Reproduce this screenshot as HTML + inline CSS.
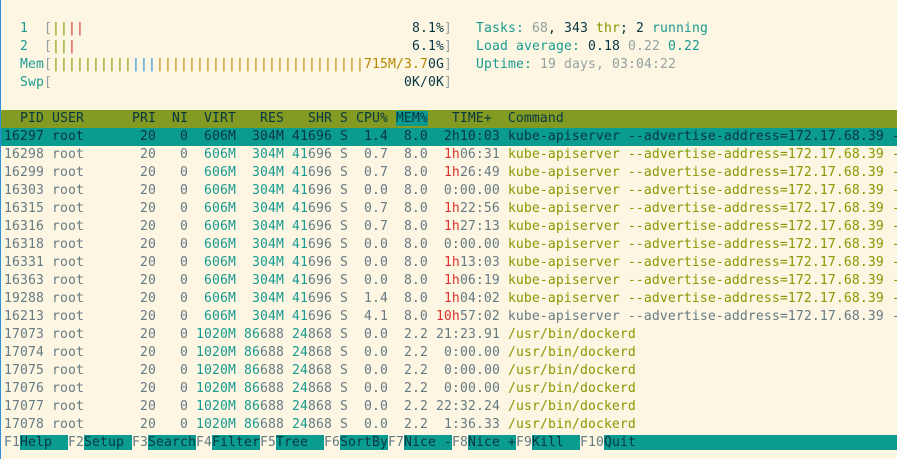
<!DOCTYPE html>
<html><head><meta charset="utf-8"><style>
html,body{margin:0;padding:0;background:#fdf6e3;}
body{width:897px;height:459px;overflow:hidden;position:relative;font-family:"DejaVu Sans Mono","Liberation Mono",monospace;font-size:13.08px;letter-spacing:0.125px;color:#657b83;border-left:1px solid #2f8fd8;box-sizing:border-box;}
.l{height:18px;line-height:18px;white-space:pre;padding-left:3px;overflow:hidden;}
.top{position:absolute;left:0;top:2px;width:897px;}
.hd{background:#839b22;color:#073642;}
.sel{background:#0b9c91;color:#073642;}
.mh{background:#0b9c91;}
.t{color:#1a9a90}.d{color:#073642}.g{color:#93a1a1}.o{color:#859900}.r{color:#dc322f}.y{color:#b58900}.b{color:#268bd2}
.fk{background:#0b9c91;color:#073642;}
.rt{position:absolute;left:475px;top:20px;}
</style></head><body>
<div class="top">
<div class="l"> </div>
<div class="l"><span class="t">  1  </span><span class="g">[</span><span class="o">||</span><span class="r">||</span>                                         <span class="d">8.1%</span><span class="g">]</span></div>
<div class="l"><span class="t">  2  </span><span class="g">[</span><span class="o">||</span><span class="r">|</span>                                          <span class="d">6.1%</span><span class="g">]</span></div>
<div class="l"><span class="t">  Mem</span><span class="g">[</span><span class="o">||||||||||</span><span class="b">|||</span><span class="y">||||||||||||||||||||||||||715M/3.7</span><span class="d">0G</span><span class="g">]</span></div>
<div class="l"><span class="t">  Swp</span><span class="g">[</span>                                            <span class="d">0K/0K</span><span class="g">]</span></div>
<div class="l"> </div>
<div class="l hd">  PID USER      PRI  NI  VIRT   RES   SHR S CPU% <span class="mh">MEM%</span>   TIME+  Command                                </div>
<div class="l sel">16297 root       20   0  606M  304M 41696 S  1.4  8.0  2h10:03 kube-apiserver --advertise-address=172.17.68.39 -        </div>
<div class="l">16298 root       20   0  <span class="t">606M  304M 41</span>696 S  0.7  8.0  <span class="r">1h</span>06:31 <span class="o">kube-apiserver --advertise-address=172.17.68.39 -</span></div>
<div class="l">16299 root       20   0  <span class="t">606M  304M 41</span>696 S  0.7  8.0  <span class="r">1h</span>26:49 <span class="o">kube-apiserver --advertise-address=172.17.68.39 -</span></div>
<div class="l">16303 root       20   0  <span class="t">606M  304M 41</span>696 S  0.0  8.0  0:00.00 <span class="o">kube-apiserver --advertise-address=172.17.68.39 -</span></div>
<div class="l">16315 root       20   0  <span class="t">606M  304M 41</span>696 S  0.7  8.0  <span class="r">1h</span>22:56 <span class="o">kube-apiserver --advertise-address=172.17.68.39 -</span></div>
<div class="l">16316 root       20   0  <span class="t">606M  304M 41</span>696 S  0.7  8.0  <span class="r">1h</span>27:13 <span class="o">kube-apiserver --advertise-address=172.17.68.39 -</span></div>
<div class="l">16318 root       20   0  <span class="t">606M  304M 41</span>696 S  0.0  8.0  0:00.00 <span class="o">kube-apiserver --advertise-address=172.17.68.39 -</span></div>
<div class="l">16331 root       20   0  <span class="t">606M  304M 41</span>696 S  0.0  8.0  <span class="r">1h</span>13:03 <span class="o">kube-apiserver --advertise-address=172.17.68.39 -</span></div>
<div class="l">16363 root       20   0  <span class="t">606M  304M 41</span>696 S  0.0  8.0  <span class="r">1h</span>06:19 <span class="o">kube-apiserver --advertise-address=172.17.68.39 -</span></div>
<div class="l">19288 root       20   0  <span class="t">606M  304M 41</span>696 S  1.4  8.0  <span class="r">1h</span>04:02 <span class="o">kube-apiserver --advertise-address=172.17.68.39 -</span></div>
<div class="l">16213 root       20   0  <span class="t">606M  304M 41</span>696 S  4.1  8.0 <span class="r">10h</span>57:02 kube-apiserver --advertise-address=172.17.68.39 -</div>
<div class="l">17073 root       20   0 <span class="t">1020M 86</span>688 <span class="t">24</span>868 S  0.0  2.2 21:23.91 <span class="o">/usr/bin/dockerd</span></div>
<div class="l">17074 root       20   0 <span class="t">1020M 86</span>688 <span class="t">24</span>868 S  0.0  2.2  0:00.00 <span class="o">/usr/bin/dockerd</span></div>
<div class="l">17075 root       20   0 <span class="t">1020M 86</span>688 <span class="t">24</span>868 S  0.0  2.2  0:00.00 <span class="o">/usr/bin/dockerd</span></div>
<div class="l">17076 root       20   0 <span class="t">1020M 86</span>688 <span class="t">24</span>868 S  0.0  2.2  0:00.00 <span class="o">/usr/bin/dockerd</span></div>
<div class="l">17077 root       20   0 <span class="t">1020M 86</span>688 <span class="t">24</span>868 S  0.0  2.2 22:32.24 <span class="o">/usr/bin/dockerd</span></div>
<div class="l">17078 root       20   0 <span class="t">1020M 86</span>688 <span class="t">24</span>868 S  0.0  2.2  1:36.33 <span class="o">/usr/bin/dockerd</span></div>
<div class="l">F1<span class="fk">Help  </span>F2<span class="fk">Setup </span>F3<span class="fk">Search</span>F4<span class="fk">Filter</span>F5<span class="fk">Tree  </span>F6<span class="fk">SortBy</span>F7<span class="fk">Nice -</span>F8<span class="fk">Nice +</span>F9<span class="fk">Kill  </span>F10<span class="fk">Quit                                               </span></div>
</div>
<div class="rt">
<div class="l" style="padding:0"><span class="t">Tasks: </span><span class="g">68</span><span class="d">, 343 </span><span class="o">thr</span><span class="d">; 2 </span><span class="t">running</span></div>
<div class="l" style="padding:0"><span class="t">Load average: </span><span class="d">0.18 </span><span class="g">0.22 </span><span class="t">0.22</span></div>
<div class="l" style="padding:0"><span class="t">Uptime: </span><span class="g">19 days, 03:04:22</span></div>
</div>
</body></html>
